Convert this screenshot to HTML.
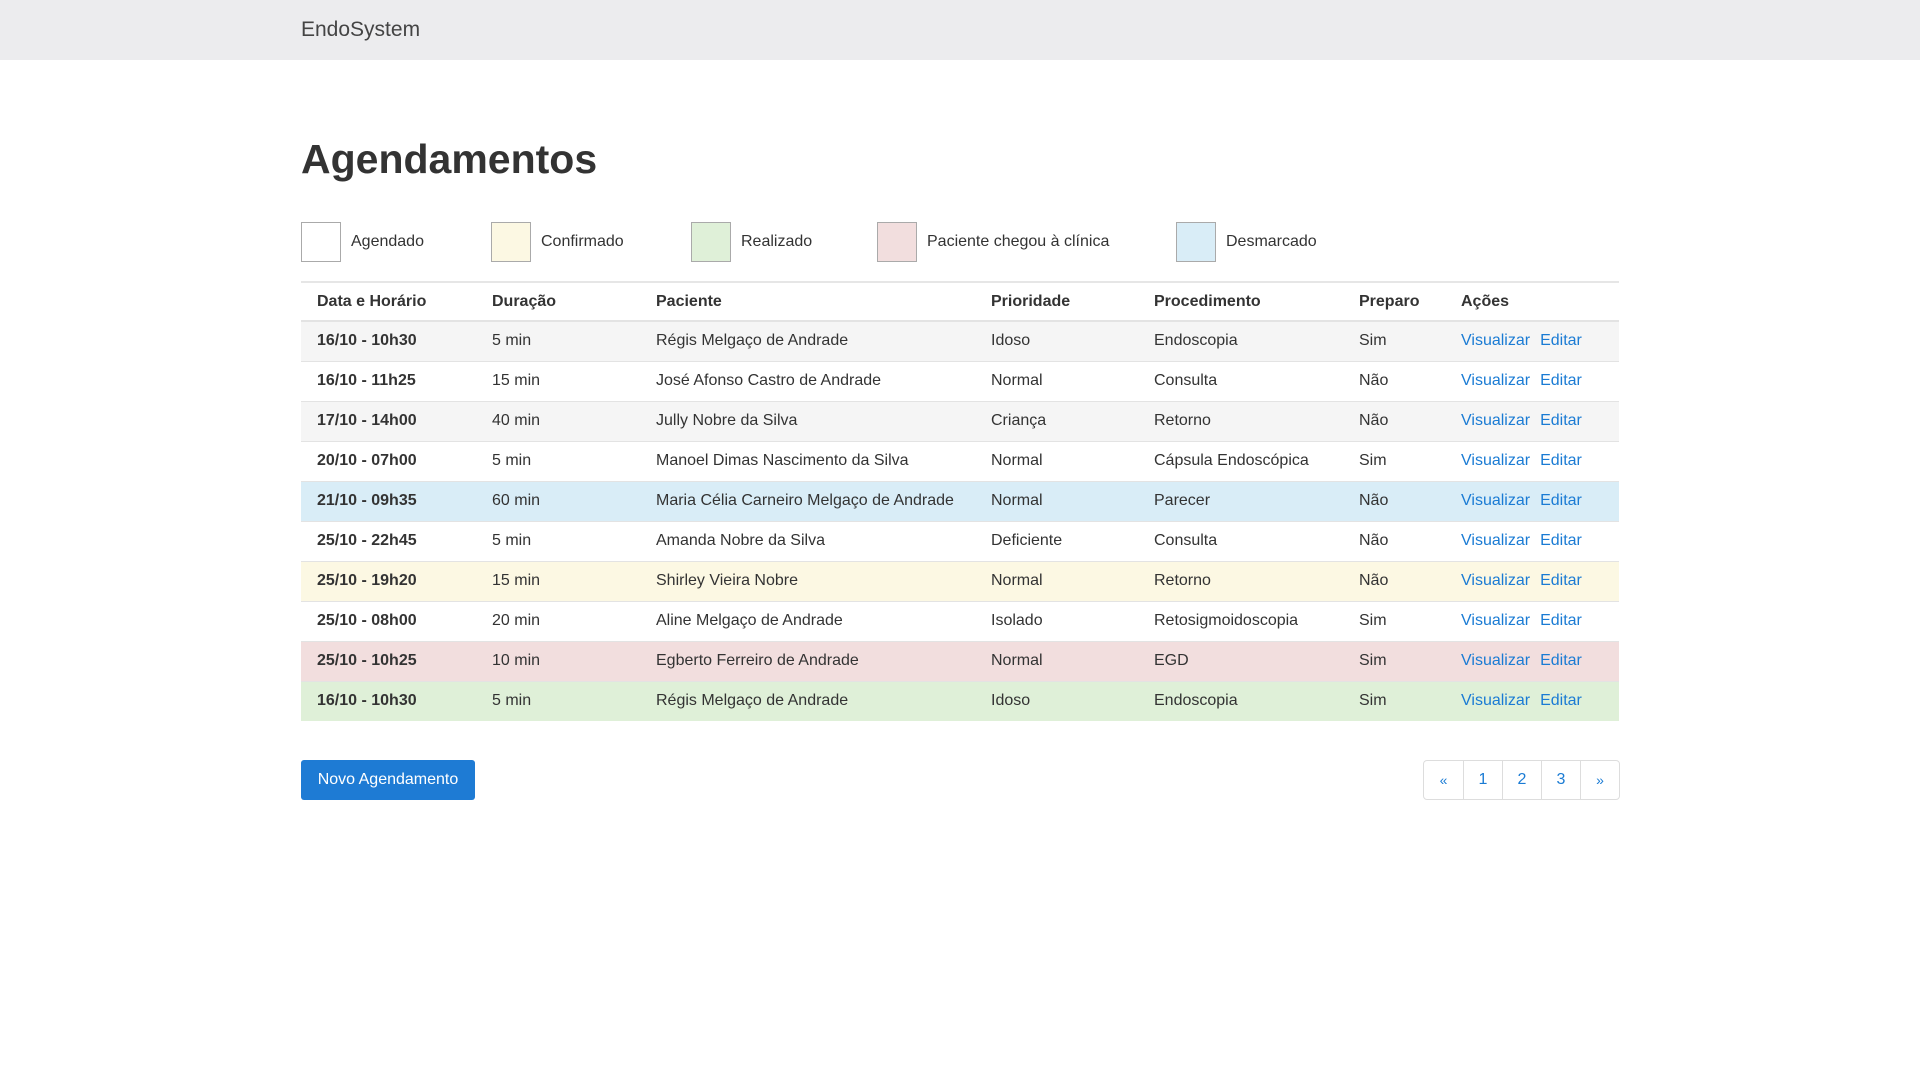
<!DOCTYPE html>
<html><head><meta charset="utf-8"><style>
*{box-sizing:border-box;margin:0;padding:0}
body{width:1920px;height:1080px;background:#fff;font-family:"Liberation Sans",Arial,sans-serif;color:#333;font-size:16px;position:relative;overflow:hidden}
.nav{position:absolute;left:0;top:0;width:1920px;height:60px;background:#ececee}
.brand{position:absolute;left:301px;top:18px;font-size:21px;color:#444}
h1{position:absolute;left:301px;top:136px;font-size:41px;font-weight:bold;color:#333}
.lg{position:absolute;top:222px;height:40px;display:flex;align-items:center}
.lg .sq{width:40px;height:40px;border:1px solid #aaa;margin-right:10px}
.lg span{font-size:16px;color:#333}
table{position:absolute;left:301px;top:281px;width:1318px;border-collapse:collapse;border-top:2px solid #e6e6e6}
th{text-align:left;font-weight:bold;height:39px;border-bottom:2px solid #e3e3e3;padding-left:16px;font-size:16px}
td{height:40px;border-top:1px solid #e3e3e3;padding-left:16px;font-size:16px}
td:first-child{font-weight:bold}
tr.s td{background:#f5f5f5}
tr.b td{background:#d9edf7}
tr.y td{background:#fcf8e3}
tr.r td{background:#f2dede}
tr.g td{background:#dff0d8}
a{color:#1a7bd4;text-decoration:none}
a+a{margin-left:10px}
.btn{position:absolute;left:301px;top:760px;width:174px;height:40px;background:#1e7bd4;color:#fff;border-radius:3px;font-size:16px;display:flex;align-items:center;justify-content:center}
.pg{position:absolute;left:1423px;top:760px;height:40px;display:flex;border:1px solid #ddd;border-radius:4px}
.pg div{width:39px;height:38px;display:flex;align-items:center;justify-content:center;color:#1a7bd4;border-left:1px solid #ddd;font-size:16px}
.pg div:first-child{border-left:none;font-size:14px}
.pg div:last-child{font-size:14px}
</style></head><body>
<div class="nav"><div class="brand">EndoSystem</div></div>
<h1>Agendamentos</h1>
<div class="lg" style="left:301px"><div class="sq" style="background:#fff"></div><span>Agendado</span></div>
<div class="lg" style="left:491px"><div class="sq" style="background:#fcf8e3"></div><span>Confirmado</span></div>
<div class="lg" style="left:691px"><div class="sq" style="background:#dff0d8"></div><span>Realizado</span></div>
<div class="lg" style="left:877px"><div class="sq" style="background:#f2dede"></div><span>Paciente chegou à clínica</span></div>
<div class="lg" style="left:1176px"><div class="sq" style="background:#d9edf7"></div><span>Desmarcado</span></div>
<table>
<colgroup><col style="width:175px"><col style="width:164px"><col style="width:335px"><col style="width:163px"><col style="width:205px"><col style="width:102px"><col></colgroup>
<tr><th>Data e Horário</th><th>Duração</th><th>Paciente</th><th>Prioridade</th><th>Procedimento</th><th>Preparo</th><th>Ações</th></tr>
<tr class="s"><td>16/10 - 10h30</td><td>5 min</td><td>Régis Melgaço de Andrade</td><td>Idoso</td><td>Endoscopia</td><td>Sim</td><td><a>Visualizar</a><a>Editar</a></td></tr>
<tr><td>16/10 - 11h25</td><td>15 min</td><td>José Afonso Castro de Andrade</td><td>Normal</td><td>Consulta</td><td>Não</td><td><a>Visualizar</a><a>Editar</a></td></tr>
<tr class="s"><td>17/10 - 14h00</td><td>40 min</td><td>Jully Nobre da Silva</td><td>Criança</td><td>Retorno</td><td>Não</td><td><a>Visualizar</a><a>Editar</a></td></tr>
<tr><td>20/10 - 07h00</td><td>5 min</td><td>Manoel Dimas Nascimento da Silva</td><td>Normal</td><td>Cápsula Endoscópica</td><td>Sim</td><td><a>Visualizar</a><a>Editar</a></td></tr>
<tr class="b"><td>21/10 - 09h35</td><td>60 min</td><td>Maria Célia Carneiro Melgaço de Andrade</td><td>Normal</td><td>Parecer</td><td>Não</td><td><a>Visualizar</a><a>Editar</a></td></tr>
<tr><td>25/10 - 22h45</td><td>5 min</td><td>Amanda Nobre da Silva</td><td>Deficiente</td><td>Consulta</td><td>Não</td><td><a>Visualizar</a><a>Editar</a></td></tr>
<tr class="y"><td>25/10 - 19h20</td><td>15 min</td><td>Shirley Vieira Nobre</td><td>Normal</td><td>Retorno</td><td>Não</td><td><a>Visualizar</a><a>Editar</a></td></tr>
<tr><td>25/10 - 08h00</td><td>20 min</td><td>Aline Melgaço de Andrade</td><td>Isolado</td><td>Retosigmoidoscopia</td><td>Sim</td><td><a>Visualizar</a><a>Editar</a></td></tr>
<tr class="r"><td>25/10 - 10h25</td><td>10 min</td><td>Egberto Ferreiro de Andrade</td><td>Normal</td><td>EGD</td><td>Sim</td><td><a>Visualizar</a><a>Editar</a></td></tr>
<tr class="g"><td>16/10 - 10h30</td><td>5 min</td><td>Régis Melgaço de Andrade</td><td>Idoso</td><td>Endoscopia</td><td>Sim</td><td><a>Visualizar</a><a>Editar</a></td></tr>
</table>
<div class="btn">Novo Agendamento</div>
<div class="pg"><div>«</div><div>1</div><div>2</div><div>3</div><div>»</div></div>
</body></html>
